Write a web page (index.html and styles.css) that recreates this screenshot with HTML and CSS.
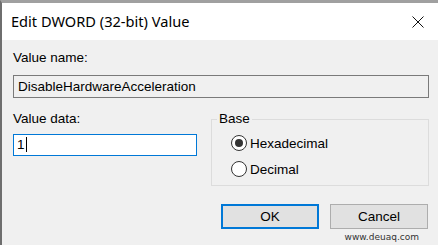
FILE: index.html
```html
<!DOCTYPE html>
<html lang="en">
	<head>
		<meta charset="UTF-8" />
		<title>Edit DWORD (32-bit) Value</title>
		<link rel="stylesheet" href="styles.css">
	</head>
	<body>
		<div class="dialog">
			<div class="titlebar">
				<span class="title">Edit DWORD (32-bit) Value</span>
				<svg class="close" width="12" height="12" viewBox="0 0 12 12">
					<path d="M0.5 0.5 L11.5 11.5 M11.5 0.5 L0.5 11.5" stroke="#111" stroke-width="1" fill="none" />
				</svg>
			</div>

			<div class="content">
				<label class="label">Value name:</label>
				<div class="field readonly">DisableHardwareAcceleration</div>

				<div class="row">
					<div class="data-col">
						<label class="label">Value data:</label>
						<div class="field active">1<span class="caret"></span></div>
					</div>
					<fieldset class="base">
						<legend>Base</legend>
						<div class="radio"><span class="dot checked"></span>Hexadecimal</div>
						<div class="radio"><span class="dot"></span>Decimal</div>
					</fieldset>
				</div>

				<div class="buttons">
					<button class="btn default">OK</button>
					<button class="btn">Cancel</button>
				</div>
				<div class="watermark">www.deuaq.com</div>
			</div>
		</div>
	</body>
</html>
```

FILE: styles.css
```css
body {
	margin: 0;
	width: 438px;
	height: 245px;
	overflow: hidden;
	background-color: #f0f0f0;
	font-family: "Segoe UI", "Noto Sans", Arial, sans-serif;
}

.dialog {
	height: 242px;
	border-top: 3px solid #a0a0a0;
	border-left: 2px solid #6e6e6e;
	background-color: #f0f0f0;
}

.titlebar {
	height: 37px;
	background-color: #ffffff;
	display: flex;
	align-items: center;
	justify-content: space-between;
	padding: 0 14px 0 9px;
}

.title {
	font-size: 14.6px;
	color: #000;
	margin-top: -2px;
}

.content {
	padding: 8px 9px 0 11px;
	font-family: "Liberation Sans", Arial, sans-serif;
	font-size: 13.5px;
	color: #000;
}

.label {
	display: block;
	height: 20px;
	line-height: 20px;
}

.field {
	height: 21px;
	line-height: 21px;
	border: 1px solid #7a7a7a;
	padding: 0 4px;
	margin-top: 7px;
}

.readonly {
	background-color: #f0f0f0;
}

.row {
	display: flex;
	margin-top: 11px;
}

.data-col {
	width: 184px;
}

.active {
	height: 20px;
	line-height: 20px;
	margin-top: 5px;
	background-color: #ffffff;
	border-color: #0078d7;
	padding-left: 3px;
}

.caret {
	display: inline-block;
	width: 1px;
	height: 15px;
	background: #000;
	vertical-align: -3px;
	margin-left: 1px;
}

.base {
	flex: 1;
	margin: 3px 0 0 14px;
	padding: 4px 0 0 19px;
	border: 1px solid #dcdcdc;
	height: 68px;
}

.base legend {
	padding: 0 2px;
	margin-left: -14px;
	line-height: 14px;
}

.radio {
	display: flex;
	align-items: center;
	height: 26px;
}

.dot {
	width: 14px;
	height: 14px;
	border: 1px solid #333;
	border-radius: 50%;
	background: #fff;
	margin-right: 3px;
	display: flex;
	align-items: center;
	justify-content: center;
}

.dot.checked::after {
	content: "";
	width: 8px;
	height: 8px;
	border-radius: 50%;
	background: #333;
}

.buttons {
	display: flex;
	justify-content: flex-end;
	gap: 11px;
	margin-top: 18px;
	padding-right: 1px;
}

.btn {
	width: 98px;
	height: 25px;
	border: 1px solid #adadad;
	background-color: #e1e1e1;
	font-family: "Liberation Sans", Arial, sans-serif;
	font-size: 13.5px;
	color: #000;
	padding: 0;
}

.btn.default {
	border: 2px solid #0078d7;
}

.watermark {
	text-align: right;
	padding-right: 10px;
	font-family: "DejaVu Sans", sans-serif;
	font-size: 9px;
	color: #333;
	margin-top: 3px;
}
```
